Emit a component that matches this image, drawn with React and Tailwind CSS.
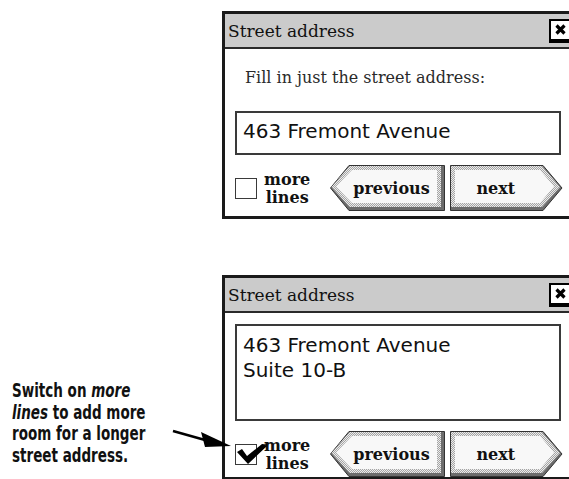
import React from 'react';

const serif = { fontFamily: '"DejaVu Serif", "Liberation Serif", serif' };
const sans = { fontFamily: '"DejaVu Sans", "Liberation Sans", sans-serif' };
const narrow = { fontFamily: '"Liberation Sans Narrow", "DejaVu Sans Condensed", "DejaVu Sans", sans-serif' };

const Dither = ({ id }) => (
    <defs>
        <pattern id={id} width="2" height="2" patternUnits="userSpaceOnUse">
            <rect width="2" height="2" fill="#ececec" />
            <rect x="0" y="0" width="1" height="1" fill="#a4a4a4" />
            <rect x="1" y="1" width="1" height="1" fill="#a4a4a4" />
        </pattern>
    </defs>
);

const PrevButton = () => (
    <div className="relative ml-[18px] flex h-[46px] w-[115px] items-center justify-center pl-[16px] pr-[4px] pt-[2px]">
        <svg className="absolute inset-0" width="115" height="46" viewBox="0 0 115 46">
            <Dither id="dPrev" />
            <polygon points="19,0.5 114.5,0.5 114.5,45.5 19,45.5 0.5,23" fill="#6c6c6c" stroke="#333" />
            <polygon points="19.5,1 111,1 111,42 19.5,42 1.5,22" fill="url(#dPrev)" />
            <polygon points="22,5 107,5 107,38 22,38 6,21.5" fill="#f8f8f8" />
        </svg>
        <span className="relative text-[16px] font-bold leading-[18px] text-[#111]" style={serif}>previous</span>
    </div>
);

const NextButton = () => (
    <div className="relative ml-[9px] flex h-[46px] w-[116px] items-center justify-center pl-[3px] pr-[22px] pt-[2px]">
        <svg className="absolute inset-0" width="116" height="46" viewBox="0 0 116 46">
            <Dither id="dNext" />
            <polygon points="0.5,0.5 93,0.5 112,23 93,45.5 0.5,45.5" fill="#6c6c6c" stroke="#333" />
            <polygon points="1,1 92,1 110,22 92,42 1,42" fill="url(#dNext)" />
            <polygon points="5,5 90,5 104,21.5 90,38 5,38" fill="#f8f8f8" />
        </svg>
        <span className="relative text-[16px] font-bold leading-[18px] text-[#111]" style={serif}>next</span>
    </div>
);

const CheckBox = ({ checked }) => (
    <div className="relative h-[21px] w-[22px] shrink-0 border-[1.5px] border-[#3a3a3a] bg-white">
        {checked && (
            <svg className="absolute left-[-2px] top-[-2px] overflow-visible" width="34" height="24" viewBox="0 0 34 24">
                <path d="M3 9 L8 6 L13 13 L28 1 L33 3 L14 21 Z" fill="#000" />
                <path d="M28 2 L33 2" stroke="#000" strokeWidth="1.5" />
            </svg>
        )}
    </div>
);

const ButtonRow = ({ checked }) => (
    <div className="flex h-[46px] items-center">
        <CheckBox checked={checked} />
        <div className="ml-[5px] w-[53px] pt-[2px] text-center text-[16px] font-bold leading-[18px] text-[#111]" style={serif}>
            more<br />lines
        </div>
        <PrevButton />
        <NextButton />
    </div>
);

const CloseBox = () => (
    <div className="flex h-[22px] w-[22px] items-center justify-center border-2 border-black bg-white shadow-[0_2px_0_#000]">
        <svg width="11" height="11" viewBox="0 0 11 11">
            <path d="M1.5 1.5 L9.5 9.5 M9.5 1.5 L1.5 9.5" stroke="#000" strokeWidth="3.2" />
        </svg>
    </div>
);

const Window = ({ children }) => (
    <div className="w-[352px] shrink-0 border-[3px] border-[#1a1a1a] bg-white">
        <div className="flex h-[35px] items-center justify-between border-b-2 border-[#2a2a2a] bg-[#cbcbcb] pl-[3px]">
            <span className="text-[17px] leading-[20px] text-[#111]" style={serif}>Street address</span>
            <div className="mb-[2px]">
                <CloseBox />
            </div>
        </div>
        <div className="px-[10px]">{children}</div>
    </div>
);

export default function App() {
    return (
        <div className="relative h-[479px] w-[569px] overflow-hidden bg-white pt-[11px]">
            {/* first dialog: single line */}
            <div className="pl-[222px]">
                <Window>
                    <div className="mt-[19px] pl-[10px] text-[16px] leading-[20px] text-[#2a2a2a]" style={serif}>
                        Fill in just the street address:
                    </div>
                    <div className="mt-[23px] h-[44px] border-2 border-[#3a3a3a] pl-[6px] pt-[6px] text-[20px] leading-[25px] text-[#111]" style={sans}>
                        463 Fremont Avenue
                    </div>
                    <div className="mt-[10px] pb-[5px]">
                        <ButtonRow />
                    </div>
                </Window>
            </div>

            {/* second dialog: more lines switched on */}
            <div className="mt-[56px] flex">
                <div className="w-[222px] shrink-0 pl-[12px] pt-[105px]">
                    <p className="origin-left scale-x-[0.79] whitespace-nowrap text-[19px] font-bold leading-[21.7px] text-[#111]" style={narrow}>
                        Switch on <i>more</i><br />
                        <i>lines</i> to add more<br />
                        room for a longer<br />
                        street address.
                    </p>
                </div>
                <Window>
                    <div className="mt-[11px] h-[97px] border-2 border-[#3a3a3a] pl-[6px] pt-[7px] text-[20px] leading-[25px] text-[#111]" style={sans}>
                        463 Fremont Avenue<br />
                        Suite 10-B
                    </div>
                    <div className="mt-[10px]">
                        <ButtonRow checked />
                    </div>
                </Window>
            </div>

            {/* pointer arrow */}
            <svg className="absolute left-[170px] top-[425px] z-10" width="66" height="28" viewBox="0 0 66 28">
                <path d="M3 6 L35 15" stroke="#000" strokeWidth="2.5" />
                <polygon points="31,7 35,22 61,21" fill="#000" />
            </svg>
        </div>
    );
}
